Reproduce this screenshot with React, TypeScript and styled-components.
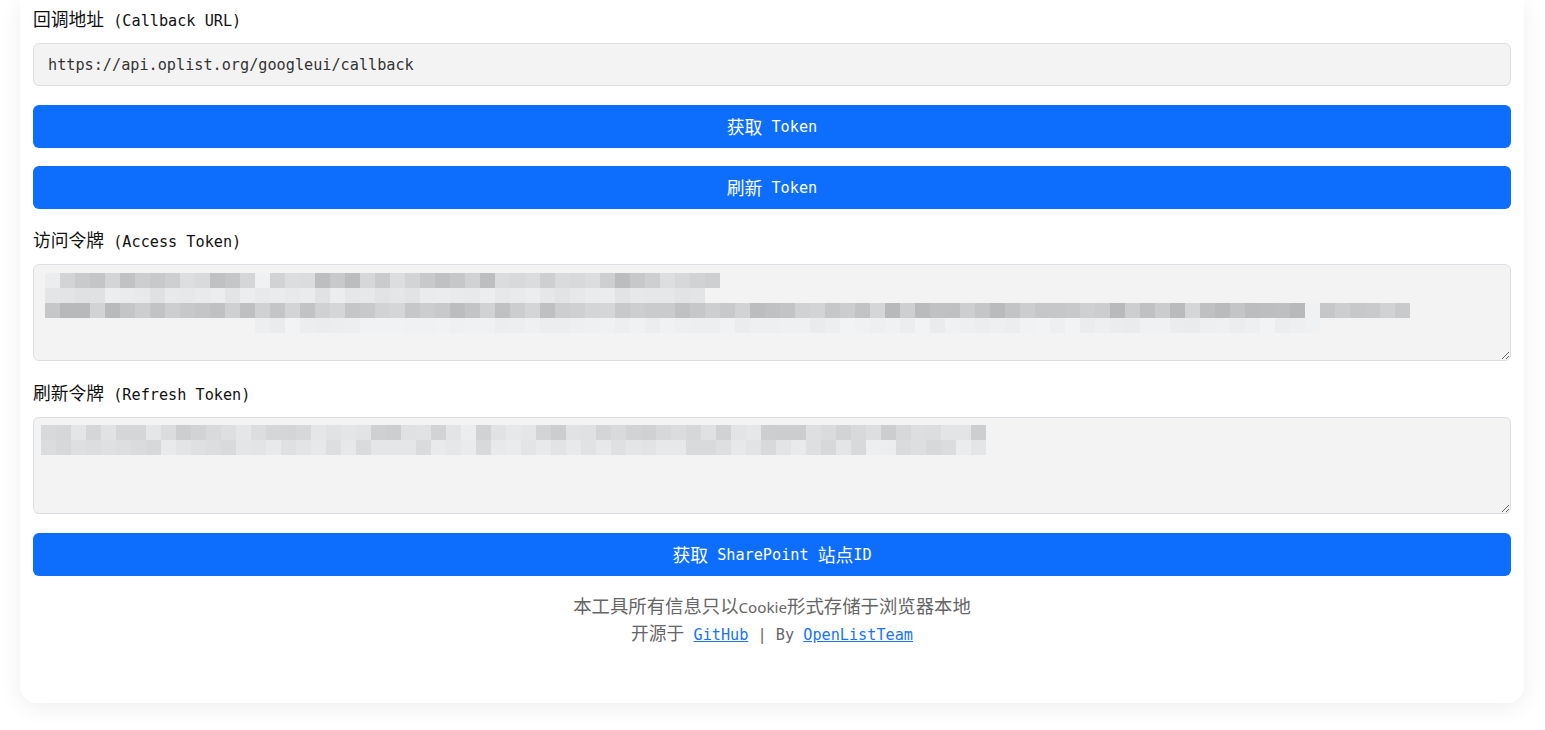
import React from "react";
import styled, { createGlobalStyle } from "styled-components";

const GlobalStyle = createGlobalStyle`
  html, body {
    margin: 0;
    padding: 0;
    background: #ffffff;
  }
  body {
    font-family: "DejaVu Sans Mono", "Liberation Mono", "Noto Sans CJK SC", monospace;
    font-size: 15.2px;
    color: #212529;
  }
`;

const Page = styled.div`
  padding: 0 21px 28px 20px;
`;

const Card = styled.main`
  background: #ffffff;
  border-radius: 0 0 16px 16px;
  box-shadow: 0 4px 22px rgba(0, 0, 0, 0.07);
  padding: 8px 13px 54px;
  display: flex;
  flex-direction: column;
`;

const Han = styled.span<{ $scale?: number }>`
  font-family: "Noto Sans CJK SC", sans-serif;
  font-size: ${(p) => p.$scale ?? 1.17}em;
  line-height: 1;
`;

const Field = styled.div<{ $gap: number }>`
  display: flex;
  flex-direction: column;
  margin-bottom: ${(p) => p.$gap}px;
`;

const Label = styled.label`
  display: block;
  height: 24px;
  line-height: 26px;
  margin-bottom: 11px;
  color: #111;
  white-space: nowrap;
`;

const Input = styled.input`
  box-sizing: border-box;
  height: 43px;
  width: 100%;
  padding: 1px 14px 0;
  border: 1px solid #dcdfe3;
  border-radius: 6px;
  background: #f3f3f3;
  font-family: inherit;
  font-size: 15.2px;
  color: #333;
  outline: none;
`;

const AreaWrap = styled.div`
  position: relative;
`;

const Area = styled.textarea`
  display: block;
  box-sizing: border-box;
  width: 100%;
  height: 97px;
  padding: 8px 12px;
  border: 1px solid #dcdfe3;
  border-radius: 6px;
  background: #f3f3f3;
  font-family: inherit;
  font-size: 15.2px;
  resize: vertical;
  outline: none;
`;

const Mosaic = styled.div<{ $left: number; $top: number }>`
  position: absolute;
  left: ${(p) => p.$left}px;
  top: ${(p) => p.$top}px;
  display: flex;
  flex-direction: column;
  pointer-events: none;
`;

const MosaicRow = styled.div`
  display: flex;
  height: 15px;
`;

const Block = styled.div`
  width: 15px;
  height: 15px;
`;

const Button = styled.button<{ $gap: number }>`
  box-sizing: border-box;
  height: 43px;
  width: 100%;
  margin-bottom: ${(p) => p.$gap}px;
  border: none;
  border-radius: 6px;
  background: #0d6efd;
  color: #ffffff;
  font-family: inherit;
  font-size: 15.2px;
  cursor: pointer;
  display: flex;
  align-items: center;
  justify-content: center;
  white-space: pre;
`;

const Footer = styled.footer`
  display: flex;
  flex-direction: column;
  align-items: center;
  color: #666;
`;

const FooterLine = styled.p<{ $sans?: boolean }>`
  margin: 0;
  height: 28px;
  line-height: 28px;
  white-space: pre;
  font-family: ${(p) =>
    p.$sans ? `"Noto Sans", "Noto Sans CJK SC", sans-serif` : "inherit"};
`;

const Link = styled.a`
  color: #1a73f5;
  text-decoration: underline;
`;

function mulberry32(a: number) {
  return function () {
    a |= 0;
    a = (a + 0x6d2b79f5) | 0;
    let t = Math.imul(a ^ (a >>> 15), 1 | a);
    t = (t + Math.imul(t ^ (t >>> 7), 61 | t)) ^ t;
    return ((t ^ (t >>> 14)) >>> 0) / 4294967296;
  };
}

type RowSpec = { start?: number; count: number; min: number; max: number; gap?: number };

function makeRows(seed: number, specs: RowSpec[]) {
  const rnd = mulberry32(seed);
  return specs.map((s) => {
    const cells: string[] = [];
    const start = s.start ?? 0;
    for (let i = 0; i < s.count; i++) {
      if (i < start) {
        cells.push("transparent");
        continue;
      }
      let v: number;
      if (s.gap && rnd() < s.gap) v = 236 + Math.floor(rnd() * 5);
      else v = Math.floor(s.min + rnd() * (s.max - s.min));
      const b = Math.min(245, v + 2);
      cells.push(`rgb(${v},${v + 1},${b})`);
    }
    return cells;
  });
}

const accessRows = makeRows(7, [
  { count: 45, min: 188, max: 222, gap: 0.08 },
  { count: 44, min: 224, max: 237 },
  { count: 91, min: 184, max: 214, gap: 0.05 },
  { start: 14, count: 85, min: 234, max: 243 },
]);

const refreshRows = makeRows(21, [
  { count: 63, min: 204, max: 232, gap: 0.04 },
  { count: 63, min: 214, max: 236, gap: 0.04 },
]);

const MosaicView: React.FC<{ rows: string[][]; left: number; top: number }> = ({
  rows,
  left,
  top,
}) => (
  <Mosaic $left={left} $top={top}>
    {rows.map((r, i) => (
      <MosaicRow key={i}>
        {r.map((c, j) => (
          <Block key={j} style={{ background: c }} />
        ))}
      </MosaicRow>
    ))}
  </Mosaic>
);

export default function App() {
  return (
    <>
      <GlobalStyle />
      <Page>
        <Card>
          <Field $gap={19}>
            <Label>
              <Han>回调地址</Han> (Callback URL)
            </Label>
            <Input readOnly value="https://api.oplist.org/googleui/callback" />
          </Field>
          <Button $gap={18}>
            <Han>获取</Han> Token
          </Button>
          <Button $gap={20}>
            <Han>刷新</Han> Token
          </Button>
          <Field $gap={21}>
            <Label>
              <Han>访问令牌</Han> (Access Token)
            </Label>
            <AreaWrap>
              <Area readOnly defaultValue="" />
              <MosaicView rows={accessRows} left={12} top={9} />
            </AreaWrap>
          </Field>
          <Field $gap={19}>
            <Label>
              <Han>刷新令牌</Han> (Refresh Token)
            </Label>
            <AreaWrap>
              <Area readOnly defaultValue="" />
              <MosaicView rows={refreshRows} left={8} top={8} />
            </AreaWrap>
          </Field>
          <Button $gap={17}>
            <Han>获取</Han> SharePoint <Han>站点</Han>ID
          </Button>
          <Footer>
            <FooterLine $sans>
              <Han $scale={1.21}>本工具所有信息只以</Han>Cookie
              <Han $scale={1.21}>形式存储于浏览器本地</Han>
            </FooterLine>
            <FooterLine>
              <Han>开源于</Han> <Link href="#">GitHub</Link> | By{" "}
              <Link href="#">OpenListTeam</Link>
            </FooterLine>
          </Footer>
        </Card>
      </Page>
    </>
  );
}
